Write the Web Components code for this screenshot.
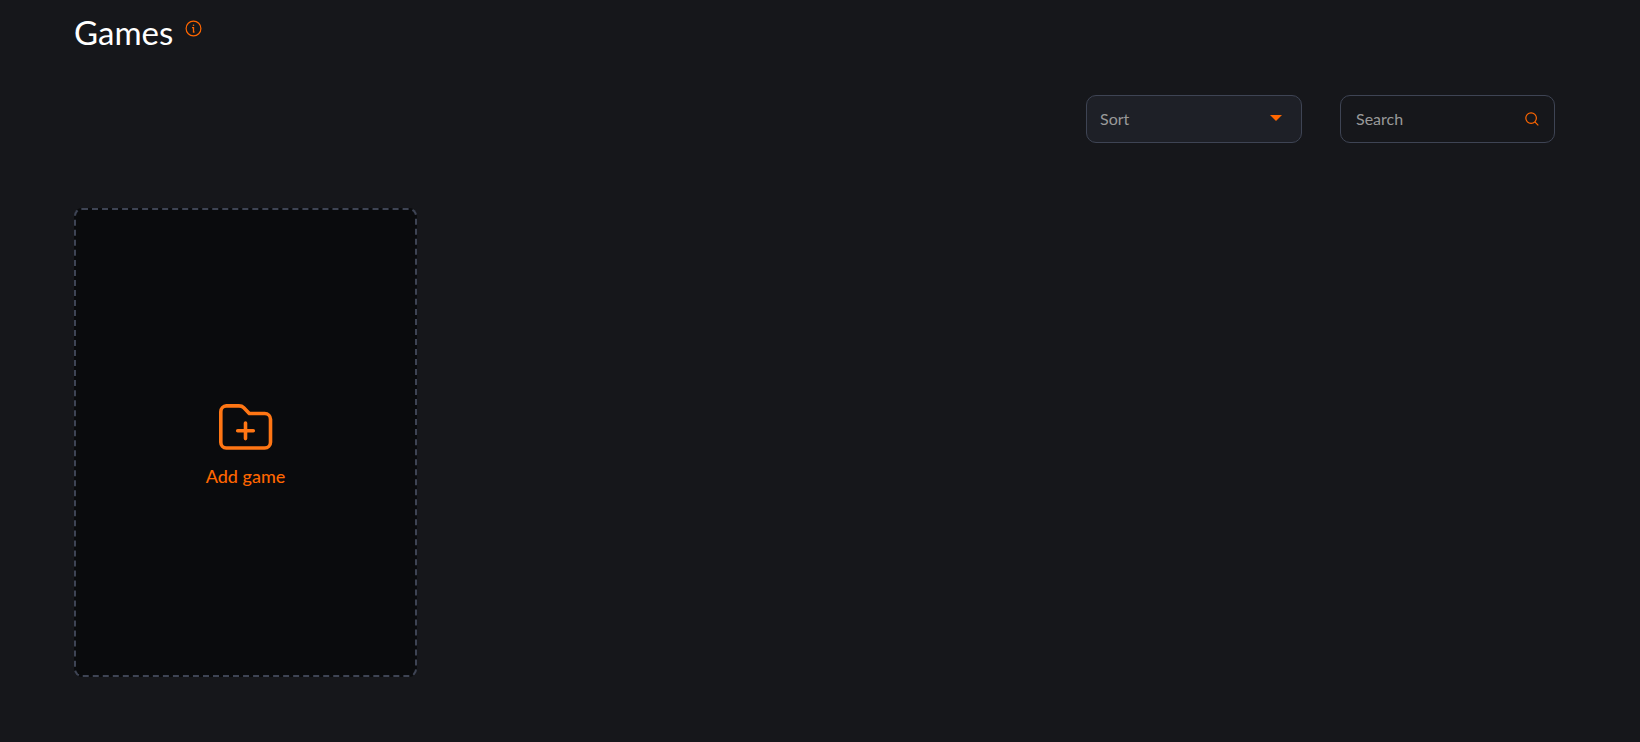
<!DOCTYPE html>
<html lang="en">
<head>
<meta charset="utf-8">
<title>Games</title>
<style>
    body {
        margin: 0;
        min-height: 100vh;
        background: #16171b;
        color: #fff;
        font-family: Lato, "Open Sans", sans-serif;
        --accent: #ff6600;
        --border: #3e4454;
        --muted: #999;
    }
</style>
</head>
<body>
<games-page>
    <page-title slot="title">Games</page-title>
    <sort-select slot="tools" label="Sort"></sort-select>
    <search-box slot="tools" label="Search"></search-box>
    <add-card>Add game</add-card>
</games-page>

<script>
// page frame: title, toolbar, grid of cards
class GamesPage extends HTMLElement {
    constructor() {
        super();
        this.attachShadow({mode: 'open'});
        this.shadowRoot.innerHTML = `
        <style>
            :host { display: block; padding: 10px 85px 60px 74px; }
            .tools { display: flex; flex-wrap: wrap; justify-content: flex-end; gap: 38px; margin: 41px 0 65px; }
            .grid { display: grid; grid-template-columns: repeat(auto-fill, minmax(300px, 343px)); gap: 32px; }
        </style>
        <header><slot name="title"></slot></header>
        <div class="tools"><slot name="tools"></slot></div>
        <main class="grid"><slot></slot></main>
        `;
    }
}

class PageTitle extends HTMLElement {
    constructor() {
        super();
        this.attachShadow({mode: 'open'});
        this.shadowRoot.innerHTML = `
        <style>
            :host { display: flex; align-items: flex-start; gap: 12px; }
            h1 { margin: 0; font-size: 33px; line-height: 44px; font-weight: 400; }
            button { display: flex; margin: 10px 0 0; padding: 0; border: 0; background: none; color: var(--accent); cursor: pointer; }
        </style>
        <h1><slot></slot></h1>
        <button type="button" aria-label="Info">
            <svg width="17" height="17" viewBox="0 0 17 17" fill="none" stroke="currentColor">
                <circle cx="8.5" cy="8.5" r="7.4" stroke-width="1.2"/>
                <path d="M7 7.6h1.5v4.4h1" stroke-width="1.3"/>
                <circle cx="8.5" cy="5.3" r=".8" fill="currentColor" stroke="none"/>
            </svg>
        </button>
        `;
    }
}

class SortSelect extends HTMLElement {
    connectedCallback() {
        const label = this.getAttribute('label');
        this.attachShadow({mode: 'open'});
        this.shadowRoot.innerHTML = `
        <style>
            :host { display: grid; width: 216px; align-items: center; }
            select, svg { grid-area: 1 / 1; }
            select {
                appearance: none; box-sizing: border-box; width: 100%; height: 48px; margin: 0; padding: 0 48px 2px 13px;
                border: 1px solid var(--border); border-radius: 10px; background: #1e2027;
                color: var(--muted); font: inherit; font-size: 16px;
            }
            svg { justify-self: end; margin: 0 20px 2px 0; pointer-events: none; }
        </style>
        <select aria-label="${label}"><option>${label}</option></select>
        <svg width="12" height="6" viewBox="0 0 12 6"><path d="M0 0h12L6 6z" fill="var(--accent)"/></svg>
        `;
    }
}

class SearchBox extends HTMLElement {
    connectedCallback() {
        const label = this.getAttribute('label');
        this.attachShadow({mode: 'open'});
        this.shadowRoot.innerHTML = `
        <style>
            :host { display: block; width: 215px; }
            form {
                display: flex; align-items: center; box-sizing: border-box; height: 48px; padding: 0 15px;
                border: 1px solid var(--border); border-radius: 10px;
            }
            input { flex: 1; min-width: 0; padding: 0 0 2px; border: 0; outline: 0; background: none; color: #fff; font: inherit; font-size: 16px; }
            input::placeholder { color: var(--muted); opacity: 1; }
            button { display: flex; padding: 0; border: 0; background: none; color: var(--accent); cursor: pointer; }
        </style>
        <form>
            <input type="text" aria-label="${label}" placeholder="${label}">
            <button type="button" aria-label="Submit">
                <svg width="14" height="14" viewBox="0 0 14 14" fill="none" stroke="currentColor" stroke-width="1.2">
                    <circle cx="6.1" cy="6.1" r="5.3"/>
                    <path d="M9.9 9.9l3.4 3.4"/>
                </svg>
            </button>
        </form>
        `;
    }
}

// dashed tile for adding a new game
class AddCard extends HTMLElement {
    constructor() {
        super();
        this.attachShadow({mode: 'open'});
        this.shadowRoot.innerHTML = `
        <style>
            :host { display: block; }
            button {
                display: flex; flex-direction: column; align-items: center; justify-content: center; gap: 14px;
                box-sizing: border-box; width: 100%; min-height: 469px; padding: 6px 0 0;
                border: 2px dashed var(--border); border-radius: 8px; background: #0a0b0d;
                color: var(--accent); font: inherit; font-size: 18px; line-height: 24px; font-weight: 500; cursor: pointer;
            }
        </style>
        <button type="button">
            <svg width="54" height="46" viewBox="0 0 54 46" fill="none" stroke="#ff7614" stroke-width="3.6" stroke-linecap="round" stroke-linejoin="round">
                <path d="M7.3 1.9H20C22.2 1.9 23.5 2.5 24.8 3.8L30.3 9.5H45.7A5.8 5.8 0 0 1 51.5 15.3V38.2A5.8 5.8 0 0 1 45.7 44H7.3A5.8 5.8 0 0 1 1.8 38.2V7.7A5.8 5.8 0 0 1 7.3 1.9z"/>
                <path d="M26.5 19v15.6M18.7 26.8h15.6"/>
            </svg>
            <slot></slot>
        </button>
        `;
    }
}

customElements.define('games-page', GamesPage);
customElements.define('page-title', PageTitle);
customElements.define('sort-select', SortSelect);
customElements.define('search-box', SearchBox);
customElements.define('add-card', AddCard);
</script>
</body>
</html>
